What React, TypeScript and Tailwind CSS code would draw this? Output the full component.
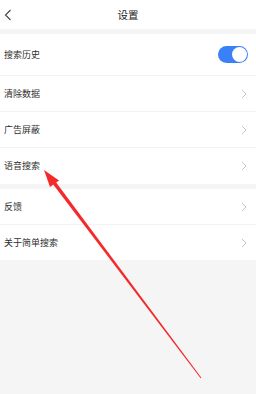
import React from "react";

function Chevron() {
  return (
    <svg width="6" height="10" viewBox="0 0 6 10" className="mr-[9px]">
      <path d="M1 1 L5 5 L1 9" fill="none" stroke="#c4c4c4" strokeWidth="1" />
    </svg>
  );
}

function Row({ label, children, h = "h-[35px]" }: { label: string; children?: React.ReactNode; h?: string }) {
  return (
    <div className={`flex items-center justify-between bg-white pl-[4px] ${h}`}>
      <span className="text-[9px] text-[#2e2e2e]">{label}</span>
      {children ?? <Chevron />}
    </div>
  );
}

function Sep() {
  return <div className="h-px bg-[#f2f2f2]" />;
}

export default function App() {
  return (
    <div
      className="relative w-[256px] h-[394px] bg-[#f5f5f5] overflow-hidden"
      style={{ fontFamily: '"Noto Sans CJK SC", "Noto Sans", sans-serif' }}
    >
      <div className="relative flex items-center justify-center h-[29px] bg-white">
        <svg width="8" height="12" viewBox="0 0 8 12" className="absolute left-[4px] top-[9px]">
          <path d="M6.5 1 L1.5 6 L6.5 11" fill="none" stroke="#444" strokeWidth="1.1" />
        </svg>
        <span className="text-[10.5px] text-[#222]">设置</span>
      </div>
      <div className="h-[5px]" />
      <Row label="搜索历史" h="h-[41px]">
        <div className="mr-[8px] flex h-[17px] w-[30px] items-center justify-end rounded-full bg-[#3a80f6] pr-[1px]">
          <div className="h-[15px] w-[15px] rounded-full bg-white" />
        </div>
      </Row>
      <Sep />
      <Row label="清除数据" />
      <Sep />
      <Row label="广告屏蔽" />
      <Sep />
      <Row label="语音搜索" h="h-[36px]" />
      <div className="h-[5px]" />
      <Row label="反馈" />
      <Sep />
      <Row label="关于简单搜索" />

      <svg className="absolute left-0 top-0" width="256" height="394" viewBox="0 0 256 394">
        <polygon
          points="201.4,377.7 55.8,182.1 53.0,184.3 200.6,378.3"
          fill="#f42a2a"
        />
        <polygon points="44,170 59,180.4 50,187" fill="#f42a2a" />
      </svg>
    </div>
  );
}
